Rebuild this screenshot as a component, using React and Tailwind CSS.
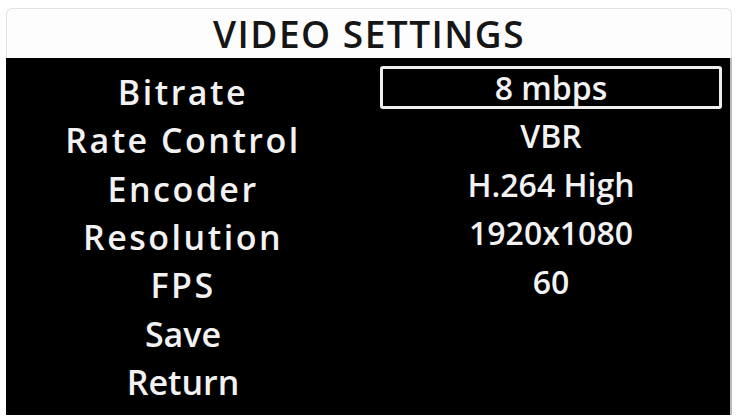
export default function App() {
  const rows = [
    ['Bitrate', '8 mbps'],
    ['Rate Control', 'VBR'],
    ['Encoder', 'H.264 High'],
    ['Resolution', '1920x1080'],
    ['FPS', '60'],
    ['Save', ''],
    ['Return', ''],
  ];

  return (
    <div className="h-[420px] w-[738px] bg-white pt-[8px] pl-[6px]" style={{ fontFamily: '"Open Sans", "Noto Sans", sans-serif' }}>
      <div className="w-[726px]">
        {/* title bar */}
        <div className="h-[50px] rounded-t-[6px] border border-b-0 border-[#e2e2e2] bg-[#fdfdfd] flex items-center justify-center">
          <span className="text-[37px] font-semibold tracking-[1.5px] text-[#161616] leading-none">VIDEO SETTINGS</span>
        </div>
        {/* menu body */}
        <div className="h-[357px] bg-black border-r-2 border-[#bbb] pt-[8px] grid grid-cols-[354px_1fr]">
          <div className="flex flex-col pt-[2px]">
            {rows.map(([label, value]) => (
              <div
                key={label}
                className={
                  'h-[48.3px] flex items-center justify-center text-[34px] font-semibold text-[#f2f2f2] leading-none ' +
                  (value ? 'tracking-[2.5px]' : 'tracking-normal')
                }
              >
                {label}
              </div>
            ))}
          </div>
          <div className="flex flex-col pl-[20px] pr-[8px]">
            {rows.filter(([, v]) => v).map(([label, value], i) => (
              <div
                key={label}
                className={
                  'h-[43px] mb-[5.5px] flex items-center justify-center text-[32px] font-semibold text-[#f2f2f2] leading-none ' +
                  (i === 0 ? 'border-[3px] border-[#eee] rounded-[3px]' : '')
                }
              >
                {value}
              </div>
            ))}
          </div>
        </div>
      </div>
    </div>
  );
}
